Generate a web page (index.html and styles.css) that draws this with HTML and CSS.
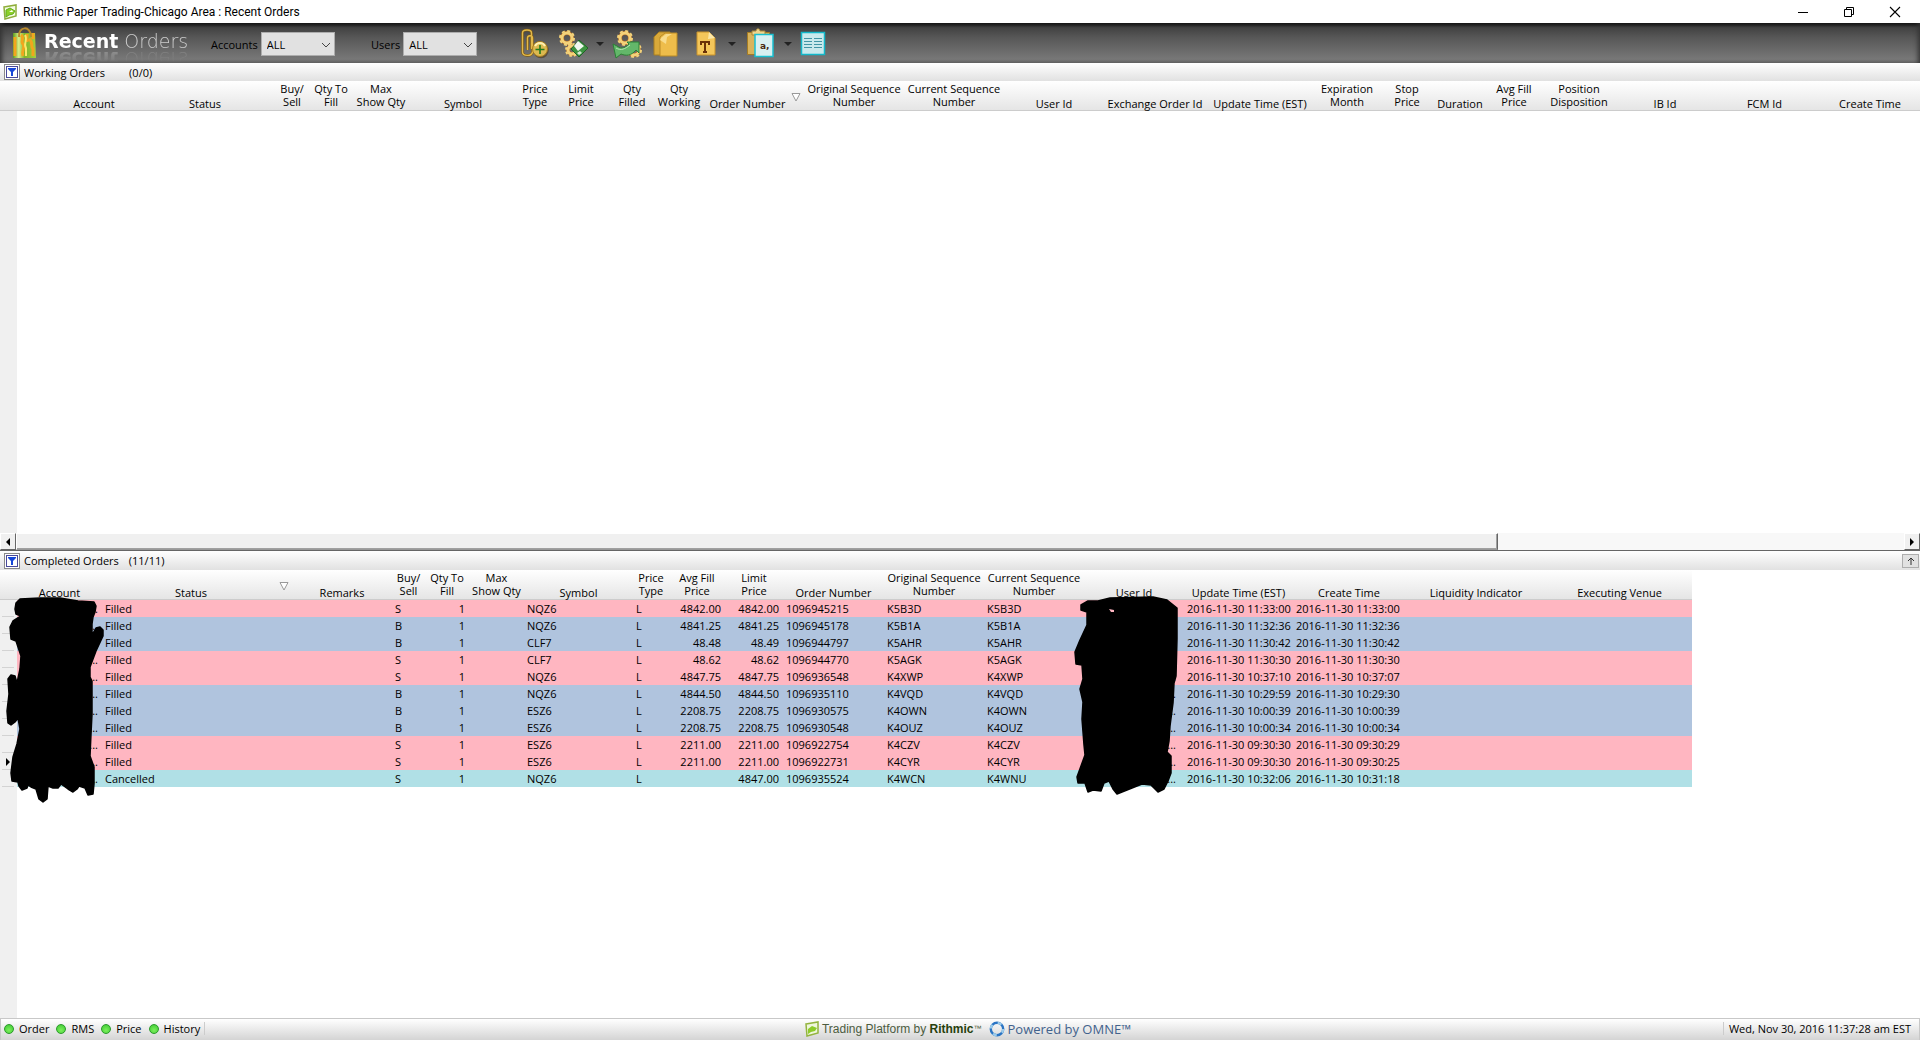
FILE: index.html
```html
<!DOCTYPE html>
<html lang="en">
<head>
<meta charset="utf-8">
<title>Rithmic Paper Trading-Chicago Area : Recent Orders</title>
<link rel="stylesheet" href="styles.css">
</head>
<body>
<header class="titlebar">
  <svg class="app-icon" width="16" height="16" viewBox="0 0 16 16"><path d="M2 3 14 1v11L3 15z" fill="#f4fbe4" stroke="#8fae3c" stroke-width="1.5"/><path d="M4 6 8 4l5 3-2 3-4 1-3 2z" fill="#8dd12a" stroke="#65ad20"/><path d="m7 8 3-2 1 2z" fill="#fff"/></svg>
  <h1 class="title">Rithmic Paper Trading-Chicago Area : Recent Orders</h1>
  <div class="window-controls">
    <button class="win-btn" aria-label="Minimize"><svg width="12" height="12"><path d="M1 6.500h10" stroke="#000"/></svg></button>
    <button class="win-btn" aria-label="Restore"><svg width="12" height="12" fill="none" stroke="#000"><path d="M1.500 3.500h7v7h-7zM3.500 3.500v-2h7v7h-2"/></svg></button>
    <button class="win-btn" aria-label="Close"><svg width="12" height="12"><path d="m1 1 10 10M11 1 1 11" stroke="#000" stroke-width="1.1"/></svg></button>
  </div>
</header>

<div class="toolbar">
  <div class="brand">
    <svg width="32" height="36" viewBox="0 0 32 36"><defs><linearGradient id="bag" x1="0" x2="1"><stop offset="0" stop-color="#5f9a1c"/><stop offset=".25" stop-color="#d9f08a"/><stop offset=".5" stop-color="#7fb42a"/><stop offset="1" stop-color="#a5cf3f"/></linearGradient></defs><path d="M4 8h22l1 25H4z" fill="url(#bag)"/><path d="M6 12v19M12 10c4 3-1 6 2 9s-2 6 0 12M18 9v8M20 14c5 3 1 8 4 10v7M24 8v6" fill="none" stroke="#f2a51e" stroke-width="3"/><path d="M16 10c3 5-2 9 1 13v8" fill="none" stroke="#f7e96a" stroke-width="2"/><path d="M10 12C9 1 22 0 22 12" fill="none" stroke="#b98a2c" stroke-width="2"/></svg>
    <p class="wordmark"><b>Recent</b> <span>Orders</span></p>
  </div>
  <div class="field field-accounts">
    <label for="accounts">Accounts</label>
    <div class="select"><select id="accounts"><option>ALL</option></select><svg class="chevron" width="10" height="6"><path d="m1 1 4 4 4-4" fill="none" stroke="#444"/></svg></div>
  </div>
  <div class="field field-users">
    <label for="users">Users</label>
    <div class="select"><select id="users"><option>ALL</option></select><svg class="chevron" width="10" height="6"><path d="m1 1 4 4 4-4" fill="none" stroke="#444"/></svg></div>
  </div>
  <div class="tools">
    <button class="tool" aria-label="Attach"><svg width="32" height="32" viewBox="520 28 32 32"><path d="M531.500 49V33c0-4-9-4-9 0v19c0 4 9 5 10 0V38c0-3-5-3-5 0v12" fill="none" stroke="#7c5a12" stroke-width="2.600"/><path d="M531.500 49V33c0-4-9-4-9 0v19c0 4 9 5 10 0V38c0-3-5-3-5 0v12" fill="none" stroke="#e2b84a" stroke-width="1.400"/><circle cx="541" cy="50.500" r="7.800" fill="#5a5040"/><circle cx="540" cy="49" r="7.500" fill="#dcb950" stroke="#a67b1d"/><path d="M535 46c2-4 8-4 10 0" stroke="#fff0b0" stroke-width="2" fill="none"/><path d="M540 45v9M535.500 49.500h9" stroke="#237a1d" stroke-width="1.600"/></svg></button>
    <button class="tool" aria-label="Save settings"><svg width="32" height="32" viewBox="556 28 32 32"><g fill="none" stroke="#b5651c"><circle cx="567" cy="38" r="5" stroke-width="4"/><circle cx="572" cy="50" r="4" stroke-width="4"/></g><g fill="none" stroke="#f3d27a"><circle cx="567" cy="38" r="5" stroke-width="3"/><circle cx="567" cy="38" r="7" stroke-width="2" stroke-dasharray="3 2.500"/><circle cx="572" cy="50" r="4" stroke-width="3"/><circle cx="572" cy="50" r="6" stroke-width="2" stroke-dasharray="2.500 2.200"/></g><path d="m579 40 9 8-9 9-8-8z" fill="#3c9440" stroke="#1f6426"/><path d="m578 41 6 5-6 5-4-5z" fill="#f0f7f0"/><path d="m577 53 3-2 2 2-3 2z" fill="#d5e8d5"/></svg></button>
    <button class="drop" aria-label="Save options"><svg width="8" height="5"><path d="M0 0h8L4 4z" fill="#222"/></svg></button>
    <button class="tool" aria-label="Reload settings"><svg width="32" height="32" viewBox="612 28 32 32"><g fill="none" stroke="#b5651c"><circle cx="625" cy="38" r="5" stroke-width="4"/><circle cx="634" cy="50" r="5" stroke-width="4"/></g><g fill="none" stroke="#f3d27a"><circle cx="625" cy="38" r="5" stroke-width="3"/><circle cx="625" cy="38" r="7" stroke-width="2" stroke-dasharray="3 2.500"/><circle cx="634" cy="50" r="5" stroke-width="3"/><circle cx="634" cy="50" r="7" stroke-width="2" stroke-dasharray="3 2.500"/></g><path d="m613 44 4 2c5 4 9 1 12-2l-2-2h12v11l-3-3c-5 6-10 6-15 4l-5 4z" fill="#63b76a" stroke="#2c8036"/><path d="M616 48c5 3 9 1 14-3" fill="none" stroke="#b8e5b6"/></svg></button>
    <button class="tool" aria-label="Copy"><svg width="32" height="32" viewBox="648 28 32 32"><path d="m654 37 5-5h11v23h-16z" fill="#d9a93a" stroke="#a97e20"/><path d="m660 37 5-4h12v23h-17z" fill="#eebd4b" stroke="#b98a26"/><path d="m660 40 1-2 5-4h6l-5 3-1 7z" fill="#f8dc8c"/></svg></button>
    <button class="tool tool-wide" aria-label="Text"><svg width="36" height="32" viewBox="684 28 36 32"><path d="M697 32h12l6 6v17h-18z" fill="#f4c65a" stroke="#c8922a"/><path d="m709 32 6 6-7 1z" fill="#fbe7a8"/><path d="M701 45v-3h8v3M705 42v10M703 52h4" fill="none" stroke="#6b3208" stroke-width="2"/></svg></button>
    <button class="drop" aria-label="Text options"><svg width="8" height="5"><path d="M0 0h8L4 4z" fill="#222"/></svg></button>
    <button class="tool" aria-label="Paste"><svg width="32" height="32" viewBox="744 28 32 32"><path d="M747.500 32.500h22v22h-22z" fill="#d9b45c" stroke="#a57c24"/><path d="M752 31h4c0-3 4-3 4 0h5v4h-13z" fill="#efd58c" stroke="#a5863a"/><path d="M755 34.500h18v22h-18z" fill="#d9f0f1" stroke="#18bfd0" stroke-width="1.500"/><text x="760" y="49" class="glyph">a,</text></svg></button>
    <button class="drop" aria-label="Paste options"><svg width="8" height="5"><path d="M0 0h8L4 4z" fill="#222"/></svg></button>
    <button class="tool" aria-label="Columns"><svg width="32" height="32" viewBox="800 28 32 32"><path d="M801.500 32.500h23v22h-23z" fill="#c9e9ec" stroke="#12b8ca" stroke-width="1.500"/><path d="M804 38.500h8m2 0h8M804 41.500h8m2 0h8M804 44.500h8m2 0h8M804 47.500h8m2 0h8" stroke="#4295a5"/></svg></button>
  </div>
</div>

<main class="panels">
  <section class="panel panel-working">
    <div class="panel-head">
      <button class="filter" aria-label="Filter working orders"><svg width="8" height="8"><path d="M0 0h8v1L5 4v4H3V4L0 1z" fill="#1747d8"/></svg></button>
      <h2>Working Orders</h2><span class="count count-working">(0/0)</span>
    </div>
    <div class="grid">
      <table class="orders working">
        <colgroup><col style="width:17px"><col style="width:154px"><col style="width:104px"><col style="width:34px"><col style="width:44px"><col style="width:56px"><col style="width:108px"><col style="width:36px"><col style="width:56px"><col style="width:46px"><col style="width:48px"><col style="width:101px"><col style="width:100px"><col style="width:100px"><col style="width:100px"><col style="width:102px"><col style="width:108px"><col style="width:66px"><col style="width:54px"><col style="width:52px"><col style="width:56px"><col style="width:74px"><col style="width:98px"><col style="width:101px"><col style="width:110px"></colgroup>
        <thead><tr><td class="corner"></td><th>Account</th><th class="wide-status">Status</th><th class="two">Buy/<br>Sell</th><th class="two">Qty To<br>Fill</th><th class="two">Max<br>Show Qty</th><th>Symbol</th><th class="two">Price<br>Type</th><th class="two">Limit<br>Price</th><th class="two">Qty<br>Filled</th><th class="two">Qty<br>Working</th><th class="sorted">Order Number<svg class="sort" width="10" height="9"><path d="M1 .500h8L5 8z" fill="#fff" stroke="#999"/></svg></th><th class="two">Original Sequence<br>Number</th><th class="two">Current Sequence<br>Number</th><th>User Id</th><th>Exchange Order Id</th><th>Update Time (EST)</th><th class="two">Expiration<br>Month</th><th class="two">Stop<br>Price</th><th>Duration</th><th class="two">Avg Fill<br>Price</th><th class="two">Position<br>Disposition</th><th>IB Id</th><th>FCM Id</th><th>Create Time</th></tr></thead>
      </table>
      <div class="gutter"></div>
    </div>
    <div class="scrollbar">
      <button class="scroll-btn" aria-label="Scroll left"><svg width="4" height="8"><path d="M4 0v8L0 4z"/></svg></button>
      <div class="track"><div class="thumb"></div></div>
      <button class="scroll-btn" aria-label="Scroll right"><svg width="4" height="8"><path d="M0 0v8l4-4z"/></svg></button>
    </div>
  </section>

  <section class="panel panel-completed">
    <div class="panel-head">
      <button class="filter" aria-label="Filter completed orders"><svg width="8" height="8"><path d="M0 0h8v1L5 4v4H3V4L0 1z" fill="#1747d8"/></svg></button>
      <h2>Completed Orders</h2><span class="count">(11/11)</span>
      <button class="collapse" aria-label="Expand panel"><svg width="8" height="8"><path d="M4 8V1M1 4l3-3 3 3" fill="none" stroke="#333"/></svg></button>
    </div>
    <div class="grid">
      <table class="orders completed">
        <colgroup><col style="width:17px"><col style="width:85px"><col style="width:190px"><col style="width:100px"><col style="width:33px"><col style="width:44px"><col style="width:55px"><col style="width:109px"><col style="width:36px"><col style="width:56px"><col style="width:58px"><col style="width:101px"><col style="width:100px"><col style="width:100px"><col style="width:100px"><col style="width:109px"><col style="width:112px"><col style="width:142px"><col style="width:145px"></colgroup>
        <thead><tr><td class="corner"></td><th>Account</th><th class="sorted">Status<svg class="sort" width="10" height="9"><path d="M1 .500h8L5 8z" fill="#fff" stroke="#999"/></svg></th><th>Remarks</th><th class="two">Buy/<br>Sell</th><th class="two">Qty To<br>Fill</th><th class="two">Max<br>Show Qty</th><th>Symbol</th><th class="two">Price<br>Type</th><th class="two">Avg Fill<br>Price</th><th class="two">Limit<br>Price</th><th>Order Number</th><th class="two">Original Sequence<br>Number</th><th class="two">Current Sequence<br>Number</th><th>User Id</th><th>Update Time (EST)</th><th>Create Time</th><th>Liquidity Indicator</th><th>Executing Venue</th></tr></thead>
        <tbody>
          <tr class="sell"><td class="row-head"></td><td class="cut">...</td><td>Filled</td><td></td><td>S</td><td class="num">1</td><td></td><td>NQZ6</td><td>L</td><td class="num">4842.00</td><td class="num">4842.00</td><td>1096945215</td><td>K5B3D</td><td>K5B3D</td><td class="cut cut-user">...</td><td>2016-11-30 11:33:00</td><td>2016-11-30 11:33:00</td><td></td><td></td></tr>
          <tr class="buy"><td class="row-head"></td><td class="cut">...</td><td>Filled</td><td></td><td>B</td><td class="num">1</td><td></td><td>NQZ6</td><td>L</td><td class="num">4841.25</td><td class="num">4841.25</td><td>1096945178</td><td>K5B1A</td><td>K5B1A</td><td class="cut cut-user">...</td><td>2016-11-30 11:32:36</td><td>2016-11-30 11:32:36</td><td></td><td></td></tr>
          <tr class="buy"><td class="row-head"></td><td class="cut">...</td><td>Filled</td><td></td><td>B</td><td class="num">1</td><td></td><td>CLF7</td><td>L</td><td class="num">48.48</td><td class="num">48.49</td><td>1096944797</td><td>K5AHR</td><td>K5AHR</td><td class="cut cut-user">...</td><td>2016-11-30 11:30:42</td><td>2016-11-30 11:30:42</td><td></td><td></td></tr>
          <tr class="sell"><td class="row-head"></td><td class="cut">...</td><td>Filled</td><td></td><td>S</td><td class="num">1</td><td></td><td>CLF7</td><td>L</td><td class="num">48.62</td><td class="num">48.62</td><td>1096944770</td><td>K5AGK</td><td>K5AGK</td><td class="cut cut-user">...</td><td>2016-11-30 11:30:30</td><td>2016-11-30 11:30:30</td><td></td><td></td></tr>
          <tr class="sell"><td class="row-head"></td><td class="cut">...</td><td>Filled</td><td></td><td>S</td><td class="num">1</td><td></td><td>NQZ6</td><td>L</td><td class="num">4847.75</td><td class="num">4847.75</td><td>1096936548</td><td>K4XWP</td><td>K4XWP</td><td class="cut cut-user">...</td><td>2016-11-30 10:37:10</td><td>2016-11-30 10:37:07</td><td></td><td></td></tr>
          <tr class="buy"><td class="row-head"></td><td class="cut">...</td><td>Filled</td><td></td><td>B</td><td class="num">1</td><td></td><td>NQZ6</td><td>L</td><td class="num">4844.50</td><td class="num">4844.50</td><td>1096935110</td><td>K4VQD</td><td>K4VQD</td><td class="cut cut-user">...</td><td>2016-11-30 10:29:59</td><td>2016-11-30 10:29:30</td><td></td><td></td></tr>
          <tr class="buy"><td class="row-head"></td><td class="cut">...</td><td>Filled</td><td></td><td>B</td><td class="num">1</td><td></td><td>ESZ6</td><td>L</td><td class="num">2208.75</td><td class="num">2208.75</td><td>1096930575</td><td>K4OWN</td><td>K4OWN</td><td class="cut cut-user">...</td><td>2016-11-30 10:00:39</td><td>2016-11-30 10:00:39</td><td></td><td></td></tr>
          <tr class="buy"><td class="row-head"></td><td class="cut">...</td><td>Filled</td><td></td><td>B</td><td class="num">1</td><td></td><td>ESZ6</td><td>L</td><td class="num">2208.75</td><td class="num">2208.75</td><td>1096930548</td><td>K4OUZ</td><td>K4OUZ</td><td class="cut cut-user">...</td><td>2016-11-30 10:00:34</td><td>2016-11-30 10:00:34</td><td></td><td></td></tr>
          <tr class="sell"><td class="row-head"></td><td class="cut">...</td><td>Filled</td><td></td><td>S</td><td class="num">1</td><td></td><td>ESZ6</td><td>L</td><td class="num">2211.00</td><td class="num">2211.00</td><td>1096922754</td><td>K4CZV</td><td>K4CZV</td><td class="cut cut-user">...</td><td>2016-11-30 09:30:30</td><td>2016-11-30 09:30:29</td><td></td><td></td></tr>
          <tr class="sell"><td class="row-head"><svg class="marker" width="4" height="8"><path d="M0 0v8l4-4z"/></svg></td><td class="cut">...</td><td>Filled</td><td></td><td>S</td><td class="num">1</td><td></td><td>ESZ6</td><td>L</td><td class="num">2211.00</td><td class="num">2211.00</td><td>1096922731</td><td>K4CYR</td><td>K4CYR</td><td class="cut cut-user">...</td><td>2016-11-30 09:30:30</td><td>2016-11-30 09:30:25</td><td></td><td></td></tr>
          <tr class="cancelled"><td class="row-head"></td><td class="cut">...</td><td>Cancelled</td><td></td><td>S</td><td class="num">1</td><td></td><td>NQZ6</td><td>L</td><td class="num"></td><td class="num">4847.00</td><td>1096935524</td><td>K4WCN</td><td>K4WNU</td><td class="cut cut-user">...</td><td>2016-11-30 10:32:06</td><td>2016-11-30 10:31:18</td><td></td><td></td></tr>
        </tbody>
      </table>
      <div class="gutter"></div>
      <svg class="redaction" width="1692" height="240" viewBox="0 571 1692 240" stroke="#000" stroke-width="1.500" stroke-linejoin="round">
        <path d="M16 604 20 600 40 599 60 599 78 602 94 603 96 607 95 613 93 618 92 625V636L96 629 100 628 103 631 103 637 96 652 90 668 90 678 92 682 92 700 92 715 91 735 90 757 94 768 94 785 93 795 88 796 85 789 82 788 79 787 77 790 73 793 68 790 61 785 58 789 53 789 48 787 47 800 43 803 39 800 36 790 31 788 28 786 27 789 22 791 19 787 18 783 12 782 11 774 13 758 17 745 20 730 18 719 15 723 11 726 8 724 7 712 9 695 8 680 11 676 15 677 17 684 20 670 21 657 17 645 16 642 11 640 10 628 13 622 21 617 16 615 15 610z"/>
        <path d="m1081 606 7-4h10l12-3 43-1 14 3 10 8v31l-1 37-2 7-1 20-3 23-1 15-2 11 4 4v17l-3 8-4 8-6 3-7-7-9-1-25 10-4-5-4-8-5 2-3 8-8-1-5 2-3-9h-7l-1-6 8-22-1-10-2-26 1-17-3-13 3-10-1-14-6-1-1-12 5-12 7-15v-13l-6-2z"/>
        <path d="m1109 610 5 1v2h-3z" fill="#ffb6c1" stroke="none"/>
      </svg>
    </div>
  </section>
</main>

<footer class="statusbar">
  <ul class="links">
    <li><i class="led"></i>Order</li><li><i class="led"></i>RMS</li><li><i class="led"></i>Price</li><li><i class="led"></i>History</li>
  </ul>
  <div class="credits">
    <svg width="14" height="16" viewBox="0 0 14 16"><path d="M1 3 13 1v11L2 15z" fill="#eef6dc" stroke="#93b43e" stroke-width="1.500"/><path d="m3 8 4-3 5 2-2 3-4 1-3 2z" fill="#8dcb2a"/></svg>
    <span class="rithmic">Trading Platform by <b>Rithmic</b><small>™</small></span>
    <svg class="ring" width="16" height="16" viewBox="0 0 16 16" fill="none" stroke-width="2.400"><circle cx="8" cy="8" r="6.200" stroke="#2a74c4"/><circle cx="8" cy="8" r="6.200" stroke="#9ccbea" stroke-dasharray="4 5.740"/></svg>
    <span class="omne">Powered by OMNE™</span>
  </div>
  <time class="clock">Wed, Nov 30, 2016 11:37:28 am EST</time>
</footer>
</body>
</html>
```

FILE: styles.css
```css
* { box-sizing: border-box; }
body {
  margin: 0;
  height: 100vh;
  display: flex;
  flex-direction: column;
  overflow: hidden;
  background: #fff;
  color: #000;
  font: 11px/13px "Open Sans", "Noto Sans", sans-serif;
}
button { padding: 0; border: 0; background: none; font: inherit; display: flex; align-items: center; justify-content: center; }
svg { display: block; }
h1, h2, p, ul { margin: 0; padding: 0; font-size: inherit; font-weight: normal; list-style: none; }

/* Window title */
.titlebar { flex: none; height: 23px; display: flex; align-items: center; padding-left: 2px; }
.title { margin-left: 5px; font-size: 12px; line-height: 16px; font-family: Roboto, sans-serif; flex: 1; }
.window-controls { display: flex; height: 20px; gap: 4px; padding-right: 4px; }
.win-btn { width: 42px; height: 20px; }

/* Toolbar */
.toolbar {
  flex: none;
  height: 40px;
  display: flex;
  align-items: center;
  background: linear-gradient(#101010, #424242 12%, #565656 35%, #777 90%, #6b6b6b);
  box-shadow: inset 5px 0 5px -3px #333, inset -5px 0 5px -3px #333;
}
.brand { display: flex; align-items: center; width: 211px; padding-left: 9px; gap: 3px; }
.wordmark {
  padding-bottom: 4px;
  font: 19px/22px "DejaVu Sans", sans-serif;
  color: #fff;
  white-space: nowrap;
  -webkit-box-reflect: below -12px linear-gradient(transparent 30%, rgba(255, 255, 255, .4));
}
.wordmark span { font-weight: 200; color: #ccc; }
.field { display: flex; align-items: center; gap: 3px; padding-top: 2px; }
.field-accounts { width: 160px; }
.field-users { width: 149px; }
.select { position: relative; width: 74px; height: 24px; }
.select select {
  appearance: none;
  width: 100%;
  height: 100%;
  padding: 0 0 0 5px;
  border: 1px solid #adadad;
  border-radius: 0;
  background: #e1e1e1;
  color: #000;
  font: inherit;
}
.chevron { position: absolute; right: 4px; top: 10px; pointer-events: none; }
.tools { display: flex; align-items: center; gap: 4px; padding-top: 2px; }
.tool { width: 32px; height: 32px; }
.tool-wide { width: 36px; }
.drop { width: 16px; height: 32px; }
.glyph { font: bold 9px "DejaVu Sans", sans-serif; fill: #4a2a10; }

/* Order panels */
.panels { flex: 1; min-height: 0; display: flex; flex-direction: column; }
.panel { min-height: 0; display: flex; flex-direction: column; }
.panel-working { flex: 488 1 0; }
.panel-completed { flex: 467 1 0; border-top: 1px solid #666; }
.panel-head {
  flex: none;
  height: 18px;
  display: flex;
  align-items: center;
  padding: 0 1px 0 4px;
  background: linear-gradient(#fff, #e1e1e1);
}
.panel-completed .panel-head { height: 19px; }
.filter { width: 16px; height: 16px; margin-right: 4px; border: 1px solid #8a8a8a; background: #fff; box-shadow: inset 0 0 0 1px #fff, inset 0 0 0 2px #4a4a9a; }
.count { margin-left: 10px; }
.count-working { margin-left: 24px; }
.collapse { width: 17px; height: 14px; margin-left: auto; border: 1px solid #adadad; background: #e1e1e1; }
.grid { position: relative; flex: 1; min-height: 0; overflow: hidden; display: flex; flex-direction: column; align-items: flex-start; }
.gutter { flex: 1; width: 17px; background: #f0f0f0; }

.orders { flex: none; table-layout: fixed; border-collapse: separate; border-spacing: 0; }
.working { width: 1925px; }
.completed { width: 1692px; }
.orders thead { background: linear-gradient(#fff, #e4e4e4); }
.orders th, .corner { height: 30px; padding: 0; border-bottom: 1px solid #ccc; }
.orders th { position: relative; font-weight: normal; vertical-align: bottom; text-align: center; white-space: nowrap; }
.orders th.two { vertical-align: top; padding-top: 1px; }
.orders th.wide-status { padding-right: 36px; }
.orders th.sorted { padding-right: 12px; }
.sort { position: absolute; right: 3px; top: 12px; }
.orders tbody td { height: 17px; padding: 0 3px; line-height: 17px; white-space: nowrap; }
.orders tbody .num { text-align: right; padding-right: 4px; }
.orders tbody .cut { text-align: right; padding-right: 4px; }
.orders tbody .cut-user { padding-right: 8px; }
.sell { background: #ffb6c1; }
.buy { background: #b0c4de; }
.cancelled { background: #b0e0e6; }
.orders tbody .row-head { padding: 0 6px; background: linear-gradient(#d3d3d3, #d3d3d3) 2px 16px / 12px 1px no-repeat #f0f0f0; }
.redaction { position: absolute; left: 0; top: 0; pointer-events: none; }

/* Horizontal scrollbar */
.scrollbar { flex: none; height: 17px; display: flex; background: #f8f8f8; }
.scroll-btn { width: 16px; height: 17px; background: #f0f0f0; border: 1px solid #fff; border-right-color: #666; border-bottom-color: #666; }
.track { flex: 1; }
.thumb { width: 78.5%; height: 17px; background: #f0f0f0; border: 1px solid #fff; border-right-color: #666; border-bottom-color: #999; box-shadow: inset -1px -1px #a0a0a0; }

/* Status bar */
.statusbar {
  flex: none;
  height: 22px;
  display: grid;
  grid-template-columns: 1fr auto 1fr;
  align-items: center;
  padding-bottom: 2px;
  border: 1px solid #c8c8c8;
  border-bottom: 0;
  background: linear-gradient(#fff, #d4d4d4);
}
.links { display: flex; gap: 7px; padding: 0 4px 0 3px; border-right: 1px solid #ccc; width: max-content; }
.links li { display: flex; align-items: center; gap: 5px; }
.led { width: 10px; height: 10px; border-radius: 50%; border: 1px solid #2a9a2a; background: radial-gradient(circle at 50% 65%, #7cf05c, #3cc832); }
.credits { display: flex; align-items: center; gap: 3px; margin-left: 16px; }
.rithmic { font: 12px/16px "Liberation Sans", sans-serif; color: #4c5c40; }
.rithmic b { color: #26400c; }
.rithmic small { font-size: 8px; vertical-align: 2px; }
.ring { margin-left: 4px; }
.omne { font-size: 13px; line-height: 16px; color: #42628c; }
.clock { justify-self: end; padding: 0 8px 0 5px; border-left: 1px solid #ccc; }
```
